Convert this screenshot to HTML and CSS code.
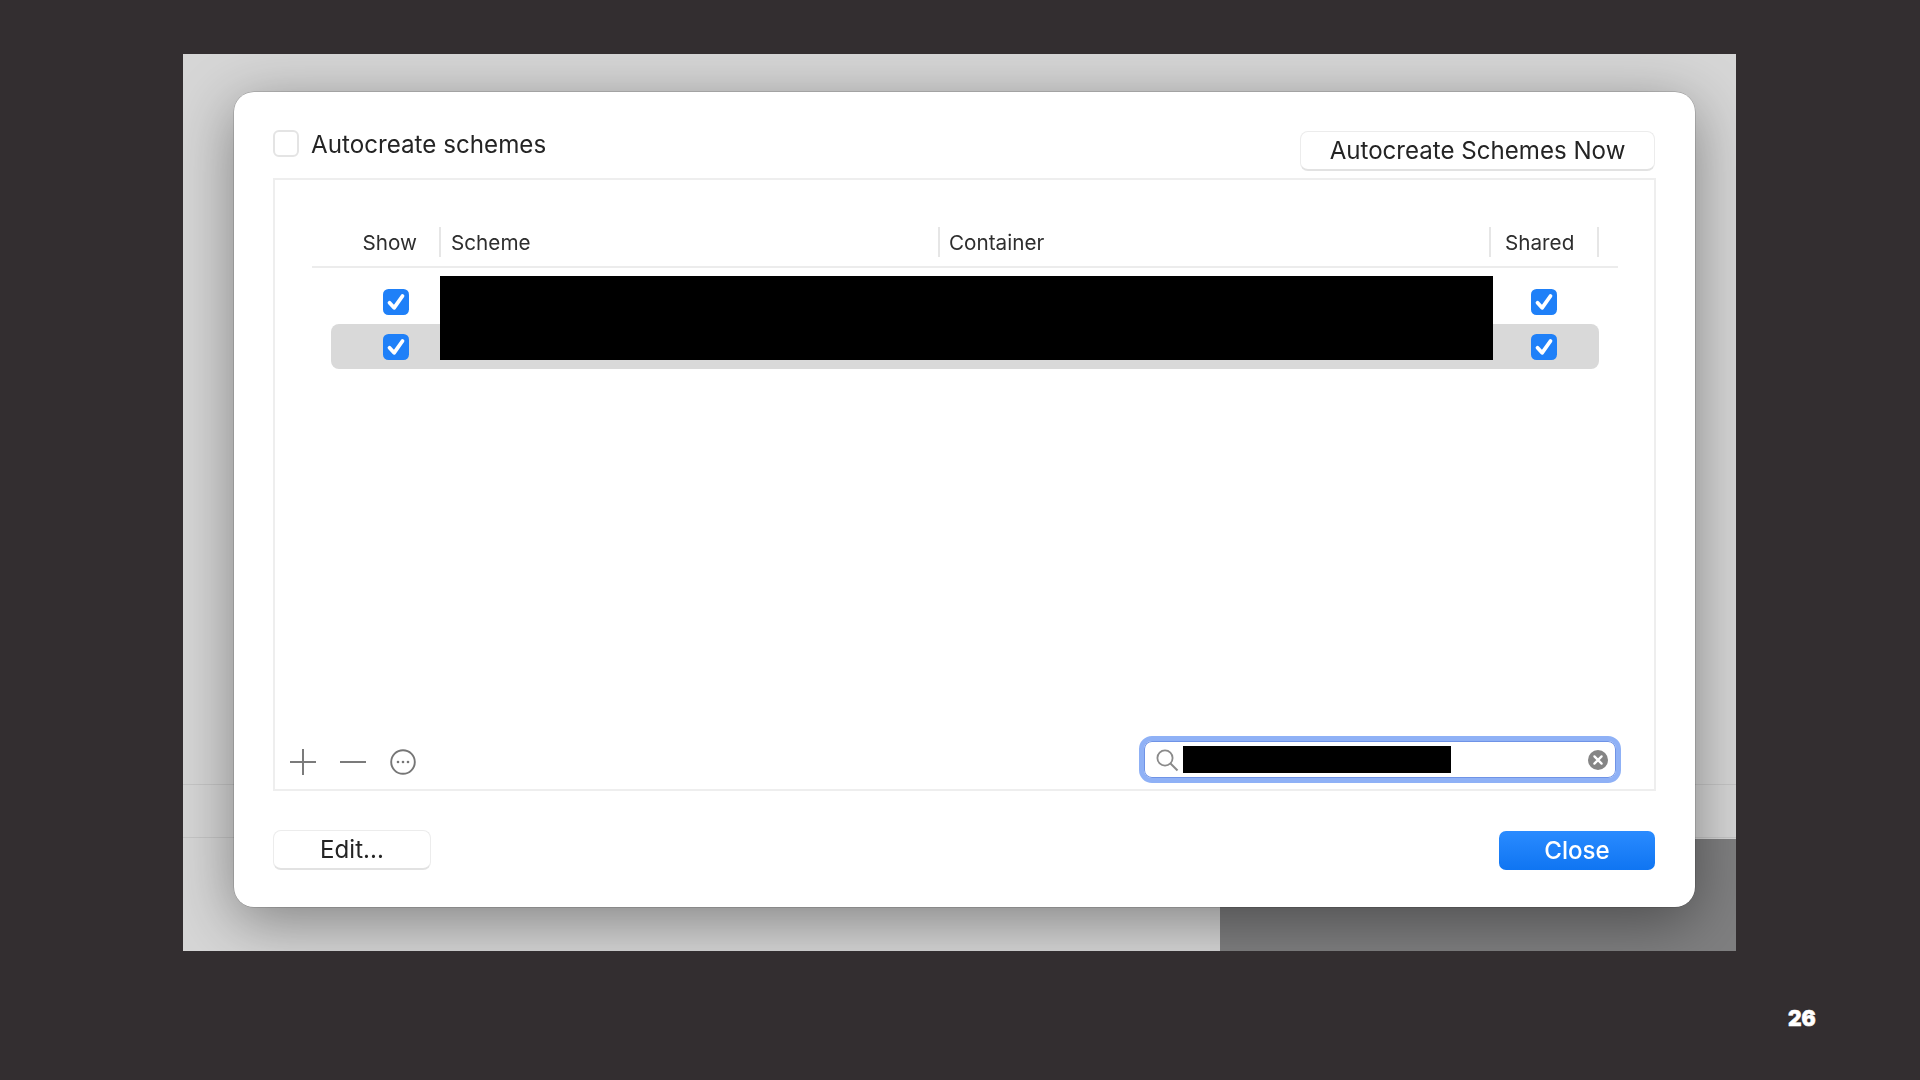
FILE: index.html
```html
<!DOCTYPE html>
<html lang="en">
<head>
<meta charset="utf-8">
<title>Manage Schemes</title>
<link rel="stylesheet" href="styles.css">
</head>
<body>
<main class="slide">
  <div class="backdrop-line line-one"></div>
  <div class="backdrop-line line-two"></div>
  <div class="backdrop-dark"></div>
  <section class="dialog">
    <div class="top-row">
      <label class="auto-label"><span class="box-empty"></span><span class="auto-text">Autocreate schemes</span></label>
      <button class="btn btn-now">Autocreate Schemes Now</button>
    </div>
    <div class="panel">
      <div class="table-head">
        <div class="th th-show">Show</div>
        <div class="th th-scheme">Scheme</div>
        <div class="th th-container">Container</div>
        <div class="th th-shared">Shared</div>
      </div>
      <div class="rows">
        <div class="row">
          <svg class="check" viewBox="0 0 26 26"><rect width="26" height="26" rx="5.5" fill="#1f80f8"/><path d="M6.5 13.8l4.6 5L19.5 7" fill="none" stroke="#fff" stroke-width="3.8" stroke-linecap="round" stroke-linejoin="round"/></svg>
          <svg class="check" viewBox="0 0 26 26"><rect width="26" height="26" rx="5.5" fill="#1f80f8"/><path d="M6.5 13.8l4.6 5L19.5 7" fill="none" stroke="#fff" stroke-width="3.8" stroke-linecap="round" stroke-linejoin="round"/></svg>
        </div>
        <div class="row row-selected">
          <svg class="check" viewBox="0 0 26 26"><rect width="26" height="26" rx="5.5" fill="#1f80f8"/><path d="M6.5 13.8l4.6 5L19.5 7" fill="none" stroke="#fff" stroke-width="3.8" stroke-linecap="round" stroke-linejoin="round"/></svg>
          <svg class="check" viewBox="0 0 26 26"><rect width="26" height="26" rx="5.5" fill="#1f80f8"/><path d="M6.5 13.8l4.6 5L19.5 7" fill="none" stroke="#fff" stroke-width="3.8" stroke-linecap="round" stroke-linejoin="round"/></svg>
        </div>
        <div class="redaction-rows"></div>
      </div>
      <div class="toolbar">
        <div class="tools">
          <svg class="tool" viewBox="0 0 26 26"><path d="M0 13h26M13 0v26" stroke="#7b7b7b" stroke-width="2" fill="none"/></svg>
          <svg class="tool" viewBox="0 0 26 26"><path d="M0 13h26" stroke="#7b7b7b" stroke-width="2" fill="none"/></svg>
          <svg class="tool" viewBox="0 0 26 26"><circle cx="13" cy="13" r="11.8" stroke="#767676" stroke-width="1.9" fill="none"/><circle cx="8" cy="13" r="1.3" fill="#767676"/><circle cx="13" cy="13" r="1.3" fill="#767676"/><circle cx="18" cy="13" r="1.3" fill="#767676"/></svg>
        </div>
        <div class="search">
          <svg class="search-icon" viewBox="0 0 24 24"><circle cx="10" cy="10" r="7.6" stroke="#8a8a8a" stroke-width="1.8" fill="none"/><path d="M15.5 15.5l7 7" stroke="#8a8a8a" stroke-width="2" fill="none"/></svg>
          <div class="redaction-search"></div>
          <svg class="clear-icon" viewBox="0 0 20 20"><circle cx="10" cy="10" r="10" fill="#858585"/><path d="M6.4 6.4l7.2 7.2M13.6 6.4l-7.2 7.2" stroke="#fff" stroke-width="2.3" stroke-linecap="round"/></svg>
        </div>
      </div>
    </div>
    <div class="bottom-row">
      <button class="btn btn-edit">Edit...</button>
      <button class="btn btn-close">Close</button>
    </div>
  </section>
</main>
<div class="page-number">26</div>
</body>
</html>
```

FILE: styles.css
```css
* { box-sizing: border-box; }
html, body { margin: 0; height: 1080px; overflow: hidden; }
body {
  background: #332e30;
  font-family: Inter, "Liberation Sans", sans-serif;
  color: #242424;
  position: relative;
  padding: 54px 184px 0 183px;
}
.slide {
  position: relative;
  height: 897px;
  padding: 38px 41px 44px 51px;
  display: flex;
  overflow: hidden;
  background: #d6d6d6;
}
.backdrop-line { position: absolute; left: 0; right: 0; height: 1px; background: #c6c6c6; }
.line-one { top: 730px; }
.line-two { top: 783px; }
.backdrop-dark {
  position: absolute;
  left: 1037px;
  right: 0;
  top: 785px;
  bottom: 0;
  background: #7f7f80;
}
.dialog {
  position: relative;
  flex: 1;
  display: flex;
  flex-direction: column;
  background: #fff;
  border-radius: 20px;
  padding: 38px 39px 37px;
  box-shadow: 0 0 0 .5px rgba(0, 0, 0, .25), 0 14px 60px rgba(0, 0, 0, .4);
  filter: blur(.35px);
}
.top-row {
  height: 48px;
  display: flex;
  justify-content: space-between;
  align-items: flex-start;
}
.auto-label {
  display: flex;
  align-items: center;
  gap: 12px;
  height: 27px;
  font-size: 24.2px;
  line-height: 27px;
}
.auto-text { padding-top: 2px; }
.box-empty {
  width: 26px;
  height: 27px;
  border: 2px solid #e4e4e4;
  border-radius: 6px;
  background: #fff;
}
.btn {
  font-family: inherit;
  font-size: 24.1px;
  height: 40px;
  padding: 0;
  color: #242424;
  background: #fff;
  border: 1px solid #ececec;
  border-bottom: 2px solid #e2e2e2;
  border-radius: 8px;
}
.btn-now { width: 355px; margin: 1px 1px 0 0; }
.panel {
  flex: 1;
  display: flex;
  flex-direction: column;
  border: 2px solid #eeeeee;
  padding: 47px 33px 6px 37px;
}
.table-head {
  display: grid;
  grid-template-columns: 127px 499px 551px 110px 1fr;
  height: 41px;
  margin-right: 3px;
  padding-bottom: 11px;
  border-bottom: 2px solid #ececec;
}
.th {
  font-size: 20.7px;
  line-height: 32px;
  height: 30px;
  color: #2e2e2e;
}
.th-show { text-align: right; padding-right: 22px; }
.th-scheme { border-left: 2px solid #e6e6e6; padding-left: 10px; }
.th-container { border-left: 2px solid #e6e6e6; padding-left: 9px; }
.th-shared { border-left: 2px solid #e6e6e6; border-right: 2px solid #e6e6e6; padding-left: 14px; }
.rows {
  position: relative;
  width: 1268px;
  margin: 11px 0 0 19px;
}
.row {
  height: 45px;
  display: flex;
  align-items: center;
  justify-content: space-between;
  padding: 0 42px 0 52px;
}
.row-selected { background: #d9d9d9; border-radius: 8px; }
.check { width: 26px; height: 26px; display: block; }
.redaction-rows {
  position: absolute;
  left: 109px;
  top: -3px;
  width: 1053px;
  height: 84px;
  background: #000;
}
.toolbar {
  margin: auto 0 0 -22px;
  display: flex;
  justify-content: space-between;
  align-items: center;
}
.tools { display: flex; align-items: center; gap: 24px; margin-top: 4px; }
.tool { width: 26px; height: 26px; display: block; }
.search {
  width: 482px;
  height: 47px;
  display: flex;
  align-items: center;
  background: #fff;
  border: 5px solid #8fb1f6;
  border-radius: 13px;
  box-shadow: inset 0 0 0 1px #6f93e6;
  padding: 0 8px 0 11px;
}
.search-icon { width: 24px; height: 24px; display: block; }
.redaction-search { width: 268px; height: 27px; background: #000; margin-left: 4px; }
.clear-icon { width: 20px; height: 20px; display: block; margin-left: auto; }
.bottom-row {
  margin-top: 39px;
  display: flex;
  justify-content: space-between;
  align-items: flex-end;
  padding: 0 1px 0 0;
}
.btn-edit { width: 158px; }
.btn-close {
  width: 156px;
  height: 39px;
  border: 0;
  border-radius: 7px;
  color: #fff;
  font-weight: 500;
  background: linear-gradient(#2a8bff, #0f75f2);
}
.page-number {
  position: absolute;
  left: 1788px;
  top: 1005px;
  font-size: 21px;
  line-height: 28px;
  font-weight: 900;
  color: #fff;
  -webkit-text-stroke: .6px #fff;
}
```
